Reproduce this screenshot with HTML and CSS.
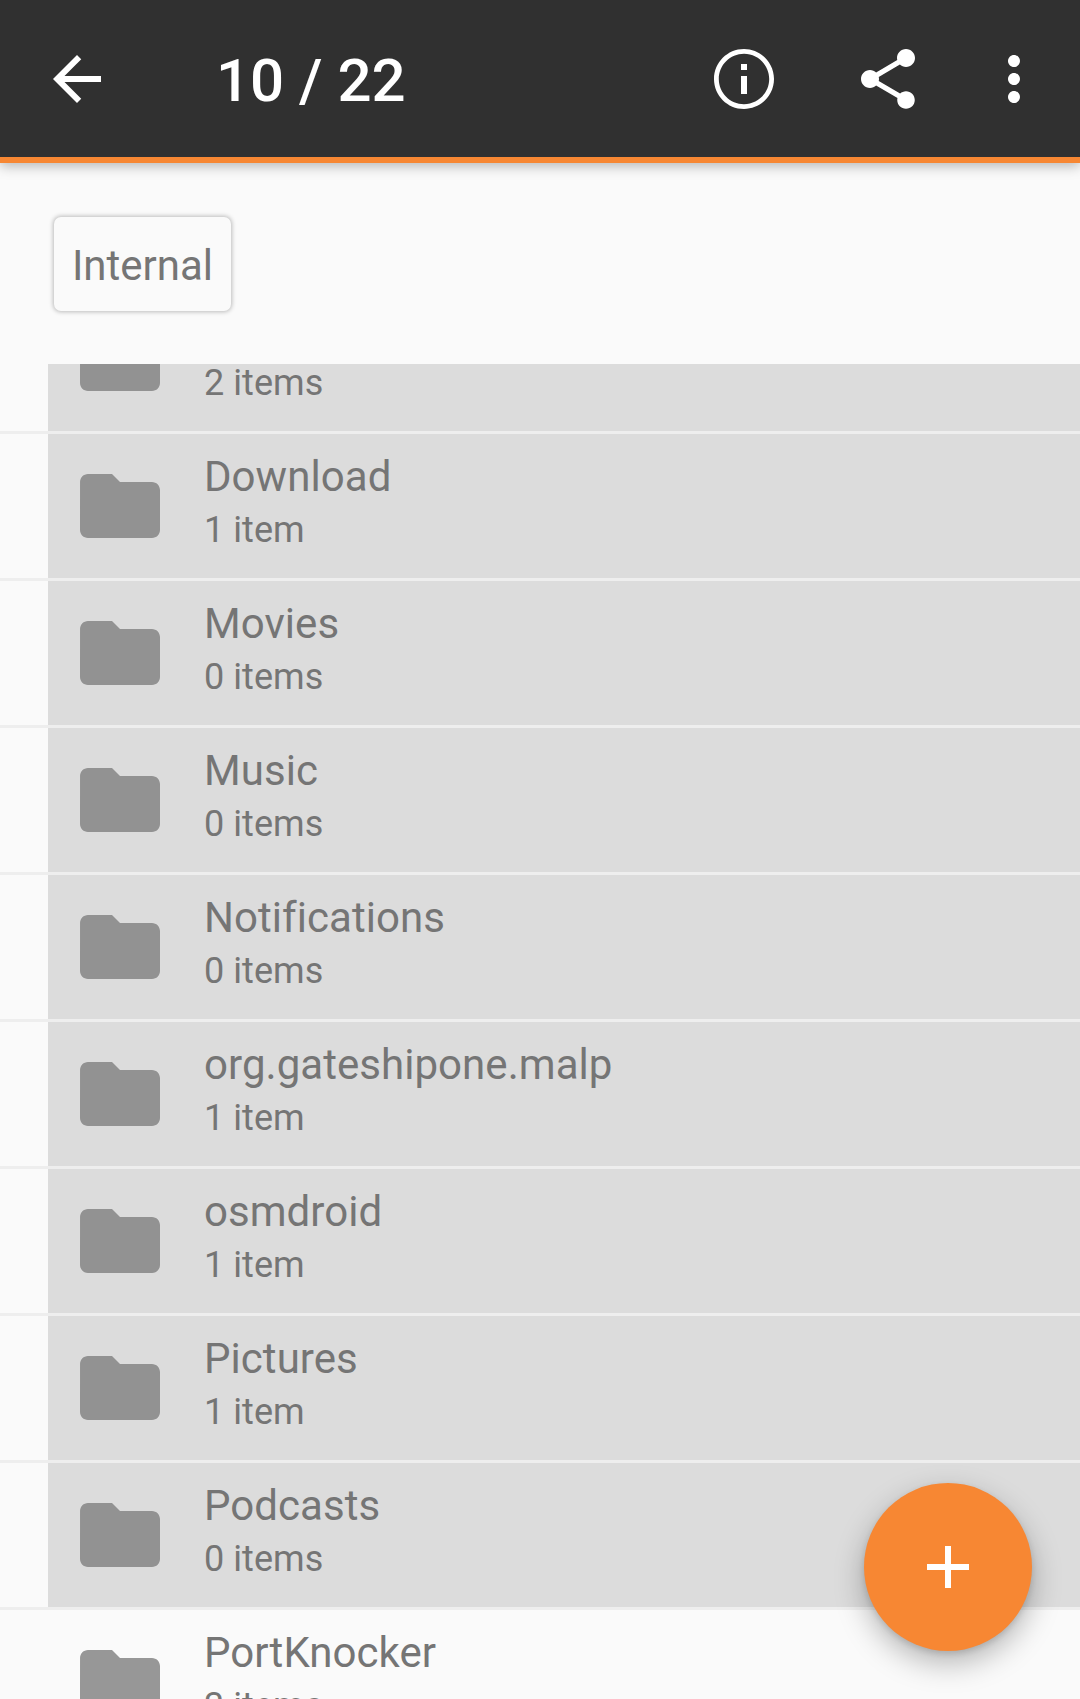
FILE: index.html
```html
<!DOCTYPE html>
<html lang="en">
<head>
<meta charset="utf-8">
<title>10 / 22</title>
<link rel="stylesheet" href="styles.css">
</head>
<body>
<svg class="defs" width="0" height="0" aria-hidden="true"><defs>
<path id="folder" d="M10 4H4c-1.1 0-1.99.9-1.99 2L2 18c0 1.1.9 2 2 2h16c1.1 0 2-.9 2-2V8c0-1.1-.9-2-2-2h-8l-2-2z"/>
</defs></svg>
<div class="app">
  <header class="toolbar">
    <button class="nav-btn"><svg class="icon" viewBox="0 0 24 24"><path d="M20 11H7.83l5.59-5.59L12 4l-8 8 8 8 1.41-1.41L7.83 13H20v-2z"/></svg></button>
    <h1 class="title">10 / 22</h1>
    <div class="actions">
      <button class="action"><svg class="icon" viewBox="0 0 24 24"><path d="M11 7h2v2h-2zm0 4h2v6h-2zm1-9C6.48 2 2 6.48 2 12s4.48 10 10 10 10-4.48 10-10S17.52 2 12 2zm0 18.4c-4.63 0-8.4-3.77-8.4-8.4S7.37 3.6 12 3.6s8.4 3.77 8.4 8.4-3.77 8.4-8.4 8.4z"/></svg></button>
      <button class="action"><svg class="icon" viewBox="0 0 24 24"><path d="M18 16.08c-.76 0-1.44.3-1.96.77L8.91 12.7c.05-.23.09-.46.09-.7s-.04-.47-.09-.7l7.05-4.11c.54.5 1.25.81 2.04.81 1.66 0 3-1.34 3-3s-1.34-3-3-3-3 1.34-3 3c0 .24.04.47.09.7L8.04 9.81C7.5 9.31 6.79 9 6 9c-1.66 0-3 1.34-3 3s1.34 3 3 3c.79 0 1.5-.31 2.04-.81l7.12 4.16c-.05.21-.08.43-.08.65 0 1.61 1.31 2.92 2.92 2.92 1.61 0 2.92-1.31 2.92-2.92s-1.31-2.92-2.92-2.92z"/></svg></button>
      <button class="action action-more"><svg class="icon" viewBox="0 0 24 24"><path d="M12 8c1.1 0 2-.9 2-2s-.9-2-2-2-2 .9-2 2 .9 2 2 2zm0 2c-1.1 0-2 .9-2 2s.9 2 2 2 2-.9 2-2-.9-2-2-2zm0 6c-1.1 0-2 .9-2 2s.9 2 2 2 2-.9 2-2-.9-2-2-2z"/></svg></button>
    </div>
  </header>
  <div class="crumbs"><span class="crumb">Internal</span></div>
  <main class="list">
    <div class="list-inner">
      <div class="row selected"><div class="row-body"><svg class="folder" viewBox="0 0 24 24"><use href="#folder"/></svg><div class="text"><div class="name">Documents</div><div class="meta">2 items</div></div></div></div>
      <div class="row selected"><div class="row-body"><svg class="folder" viewBox="0 0 24 24"><use href="#folder"/></svg><div class="text"><div class="name">Download</div><div class="meta">1 item</div></div></div></div>
      <div class="row selected"><div class="row-body"><svg class="folder" viewBox="0 0 24 24"><use href="#folder"/></svg><div class="text"><div class="name">Movies</div><div class="meta">0 items</div></div></div></div>
      <div class="row selected"><div class="row-body"><svg class="folder" viewBox="0 0 24 24"><use href="#folder"/></svg><div class="text"><div class="name">Music</div><div class="meta">0 items</div></div></div></div>
      <div class="row selected"><div class="row-body"><svg class="folder" viewBox="0 0 24 24"><use href="#folder"/></svg><div class="text"><div class="name">Notifications</div><div class="meta">0 items</div></div></div></div>
      <div class="row selected"><div class="row-body"><svg class="folder" viewBox="0 0 24 24"><use href="#folder"/></svg><div class="text"><div class="name">org.gateshipone.malp</div><div class="meta">1 item</div></div></div></div>
      <div class="row selected"><div class="row-body"><svg class="folder" viewBox="0 0 24 24"><use href="#folder"/></svg><div class="text"><div class="name">osmdroid</div><div class="meta">1 item</div></div></div></div>
      <div class="row selected"><div class="row-body"><svg class="folder" viewBox="0 0 24 24"><use href="#folder"/></svg><div class="text"><div class="name">Pictures</div><div class="meta">1 item</div></div></div></div>
      <div class="row selected"><div class="row-body"><svg class="folder" viewBox="0 0 24 24"><use href="#folder"/></svg><div class="text"><div class="name">Podcasts</div><div class="meta">0 items</div></div></div></div>
      <div class="row"><div class="row-body"><svg class="folder" viewBox="0 0 24 24"><use href="#folder"/></svg><div class="text"><div class="name">PortKnocker</div><div class="meta">3 items</div></div></div></div>
    </div>
  </main>
  <button class="fab"><svg class="fab-icon" viewBox="0 0 42 42"><path d="M18 0h6v18h18v6H24v18h-6V24H0v-6h18z"/></svg></button>
</div>
</body>
</html>
```
FILE: styles.css
```css
* { box-sizing: border-box; }
html, body { margin: 0; padding: 0; }
body { width: 1080px; height: 1699px; overflow: hidden; background: #fafafa; font-family: Roboto, "Liberation Sans", sans-serif; }
.defs { display: block; height: 0; }
.app { position: relative; width: 1080px; height: 1699px; overflow: hidden; display: flex; flex-direction: column; }
button { border: 0; padding: 0; background: none; display: flex; align-items: center; justify-content: center; }

.toolbar { flex: none; height: 163px; background: #303030; border-bottom: 6px solid #f78733; box-shadow: 0 3px 12px rgba(0,0,0,.28); display: flex; align-items: center; padding-left: 41px; padding-right: 12px; position: relative; z-index: 2; }
.nav-btn { width: 72px; height: 72px; flex: none; }
.icon { width: 72px; height: 72px; fill: #fff; display: block; }
.title { margin: 4px 0 0 103px; flex: 1; font-size: 60px; font-weight: 500; color: #fff; line-height: 72px; }
.actions { display: flex; flex: none; }
.action { width: 144px; height: 72px; }
.action-more { width: 108px; }

.crumbs { flex: none; height: 201px; padding: 54px 0 0 54px; }
.crumb { display: inline-flex; align-items: center; justify-content: center; width: 177px; height: 94px; padding-top: 2px; border-radius: 7px; background: #fafafa; box-shadow: 0 0 4px 1px rgba(0,0,0,.25); font-size: 42px; color: #757575; }

.list { flex: 1; overflow: hidden; min-height: 0; }
.list-inner { margin-top: -77px; }
.row { height: 147px; border-bottom: 3px solid #eeeeee; }
.row-body { height: 144px; margin-left: 48px; padding-left: 24px; display: flex; align-items: center; }
.row.selected .row-body { background: #dcdcdc; }
.folder { width: 96px; height: 96px; flex: none; fill: #979797; display: block; }
.row.selected .folder { fill: #929292; }
.text { margin-left: 36px; padding-bottom: 10px; }
.name { font-size: 42px; line-height: 54px; letter-spacing: .05px; color: #757575; }
.meta { font-size: 36px; line-height: 44px; margin-top: 4px; letter-spacing: .05px; color: #757575; }

.fab { position: absolute; left: 864px; top: 1483px; width: 168px; height: 168px; border-radius: 50%; background: #f78733; box-shadow: 0 12px 30px rgba(0,0,0,.28), 0 3px 6px rgba(0,0,0,.12); }
.fab-icon { width: 42px; height: 42px; fill: #fff; display: block; }
```
